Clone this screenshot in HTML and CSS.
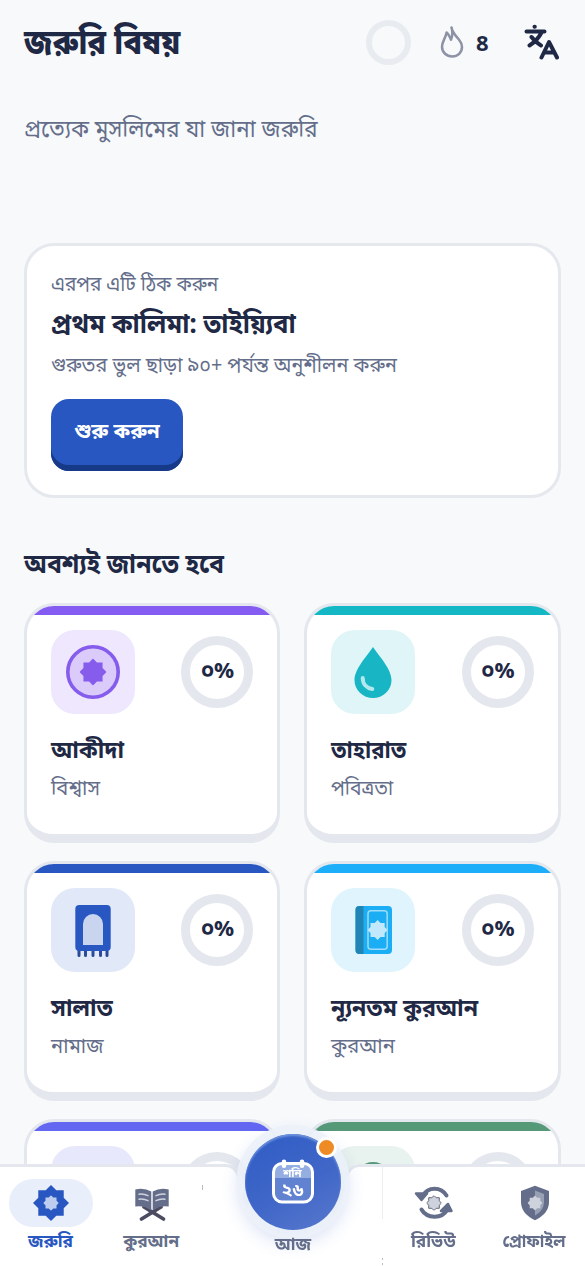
FILE: index.html
```html
<!DOCTYPE html>
<html lang="bn">
<head>
<meta charset="utf-8">
<meta name="viewport" content="width=device-width, initial-scale=1">
<title>জরুরি বিষয়</title>
<link rel="stylesheet" href="styles.css">
</head>
<body>
<svg class="defs" aria-hidden="true">
  <symbol id="star" viewBox="-18 -18 36 36"><path d="M0-18L5.27-12.73H12.73V-5.27L18 0L12.73 5.27V12.73H5.27L0 18L-5.27 12.73H-12.73V5.27L-18 0L-12.73-5.27V-12.73H-5.27Z"/></symbol>
</svg>
<div class="screen">
  <header class="topbar">
    <h1 class="page-title">জরুরি বিষয়</h1>
    <span class="goal-ring"></span>
    <svg class="flame" width="24" height="32" viewBox="0 0 24 32"><path d="M11.500 1.500c.5 4.800 3.800 7.600 7.400 12 2.100 2.600 3.100 5 3.100 7.500 0 5.500-4.300 9.500-9.800 9.500S2 26.500 2 20.700c0-5.200 3.500-8.200 4.600-14.200 2.200 1.700 3.200 4.200 4.400 7.200 1.500-3.700 1.700-8.300.5-12.200z"/></svg>
    <span class="streak" lang="en">&#56;</span>
    <svg class="translate" width="36" height="36" viewBox="0 0 36 36"><path d="M11.500 2.800h.3M3.500 7.500h18M18.500 8.500C16 13.500 12 18 6.500 21.500M8.500 13c2.500 3.500 5 6 9.500 8.500M18.500 33.500l7.500-15.500 8 15.500M21 28.500h10"/></svg>
  </header>
  <p class="intro">প্রত্যেক মুসলিমের যা জানা জরুরি</p>

  <section class="next-card">
    <p class="eyebrow">এরপর এটি ঠিক করুন</p>
    <h2 class="next-title">প্রথম কালিমা: তাইয়্যিবা</h2>
    <p class="next-copy">গুরুতর ভুল ছাড়া ৯০+ পর্যন্ত অনুশীলন করুন</p>
    <button class="start">শুরু করুন</button>
  </section>

  <h2 class="section-title">অবশ্যই জানতে হবে</h2>
  <main class="grid">
    <article class="card violet">
      <div class="card-head">
        <span class="tile"><svg width="54" height="54" viewBox="0 0 54 54"><circle cx="27" cy="27" r="25.200" fill="#dacbfb" stroke="#855cec" stroke-width="3.600"/><use href="#star" x="13.500" y="13.500" width="27" height="27" fill="#855cec"/></svg></span>
        <span class="ring">০%</span>
      </div>
      <h3 class="name">আকীদা</h3><p class="sub">বিশ্বাস</p>
    </article>
    <article class="card teal">
      <div class="card-head">
        <span class="tile"><svg width="54" height="54" viewBox="0 0 54 54"><path d="M27 2C33 11 45.500 24 45.500 35A18.500 18 0 0 1 8.500 35C8.500 24 21 11 27 2Z" fill="#18b6c4"/><path d="M16.700 33c0 6 4 10.200 9.600 11" fill="none" stroke="#b3e9ee" stroke-width="4" stroke-linecap="round"/></svg></span>
        <span class="ring">০%</span>
      </div>
      <h3 class="name">তাহারাত</h3><p class="sub">পবিত্রতা</p>
    </article>
    <article class="card blue">
      <div class="card-head">
        <span class="tile"><svg width="54" height="54" viewBox="0 0 54 54"><path d="M13 43v9.500M19.500 43v9.500M27 43v9.500M34.500 43v9.500M41 43v9.500" stroke="#2b4b99" stroke-width="3" stroke-linecap="round"/><rect x="9.300" y="2" width="35.400" height="46" rx="4" fill="#2857c2"/><path d="M17 42V21a10 10 0 0 1 20 0v21z" fill="#c9d4ef"/></svg></span>
        <span class="ring">০%</span>
      </div>
      <h3 class="name">সালাত</h3><p class="sub">নামাজ</p>
    </article>
    <article class="card sky">
      <div class="card-head">
        <span class="tile"><svg width="54" height="54" viewBox="0 0 54 54"><rect x="9.500" y="3" width="36.500" height="48" rx="4" fill="#1caef5"/><path d="M13.500 3h4v48h-4a4 4 0 0 1-4-4V7a4 4 0 0 1 4-4z" fill="#2085b5"/><rect x="22" y="7.700" width="19.200" height="38.500" rx="3" fill="none" stroke="#9edcf9" stroke-width="1.500"/><use href="#star" x="21.600" y="17" width="20" height="20" fill="#c1e9fb"/></svg></span>
        <span class="ring">০%</span>
      </div>
      <h3 class="name">ন্যূনতম কুরআন</h3><p class="sub">কুরআন</p>
    </article>
    <article class="card indigo">
      <div class="card-head"><span class="tile"></span><span class="ring"></span></div>
    </article>
    <article class="card green">
      <div class="card-head"><span class="tile"><svg width="54" height="54" viewBox="0 0 54 54"><circle cx="27" cy="19.500" r="18.500" fill="#559979"/></svg></span><span class="ring"></span></div>
    </article>
  </main>
</div>

<nav class="tabs">
  <a class="tab active"><span class="pill"><svg width="36" height="36" viewBox="0 0 36 36"><use href="#star" width="36" height="36" fill="#2857c2"/><use href="#star" x="10.200" y="10.200" width="15.600" height="15.600" fill="#bccdf0"/></svg></span><span class="label">জরুরি</span></a>
  <a class="tab"><span class="pill"><svg width="36" height="36" viewBox="0 0 36 36"><path d="M7.500 34L27 22M29.500 34L10 22" stroke="#4b4b61" stroke-width="3.600" stroke-linecap="round"/><path d="M1.300 4.500Q10 2.500 17.300 6.500V25.500Q10 20 1.300 21.500ZM34.700 4.500Q26 2.500 18.700 6.500V25.500Q26 20 34.700 21.500Z" fill="#646e8a"/><path d="M5 9.200q5-.6 9 1.500M5 14.200q5-.6 9 1.500M31 9.200q-5-.6-9 1.500M31 14.200q-5-.6-9 1.500" fill="none" stroke="#d0d4df" stroke-width="1.500" stroke-linecap="round"/></svg></span><span class="label">কুরআন</span></a>
  <div class="tab center">
    <svg class="notch" width="181" height="102" viewBox="0 0 181 102"><path d="M0 0H25Q35 1 37 14C38 48 60 71 90.500 71S143 48 144 14Q146 1 156 0H181V102H0Z" fill="#fff"/><path d="M0 1.500H24Q34 2 36.500 13M181 1.500H157Q147 2 144.500 13" fill="none" stroke="#e4e7ed" stroke-width="3"/><path d="M180.500 3v52" stroke="#eceef2"/><path d="M.5 21v5M180.500 94v2M180.500 99v2" stroke="#b8bbc2"/></svg>
    <span class="today"><svg width="44" height="48" viewBox="0 0 44 48"><rect x="2.500" y="5.500" width="39" height="38.500" rx="8.500" fill="#6182d0"/><path d="M2.500 20V14A8.500 8.500 0 0 1 11 5.500H33A8.500 8.500 0 0 1 41.500 14V20Z" fill="#94aee1"/><rect x="2.500" y="5.500" width="39" height="38.500" rx="8.500" fill="none" stroke="#fff" stroke-width="3"/><path d="M13 3.800v4M31 3.800v4" stroke="#fff" stroke-width="4.500" stroke-linecap="round"/><text x="21.500" y="18.500" class="weekday">শনি</text><text x="21.500" y="38" class="date">২৬</text></svg><i class="dot"></i></span>
    <span class="label today-label">আজ</span>
  </div>
  <a class="tab"><span class="pill"><svg width="40" height="36" viewBox="0 0 40 36"><path d="M9 10.500C14 1.500 27 1.500 32.500 10.500M7.500 24.500C13 34 28 34 33 25" fill="none" stroke="#646e8a" stroke-width="4" stroke-linecap="round"/><path d="M2 8.500L13 8.500L7.500 15ZM27 26L34 19L37.500 26Z" fill="#646e8a" stroke="#646e8a" stroke-width="2.500" stroke-linejoin="round"/><use href="#star" x="12.500" y="10.500" width="15" height="15" fill="#cdd2dd" stroke="#4b4b61" stroke-width="2"/></svg></span><span class="label">রিভিউ</span></a>
  <a class="tab"><span class="pill"><svg width="36" height="36" viewBox="0 0 36 36"><path d="M18 .8L32 6V17C32 25.500 26 31.500 18 35.200C10 31.500 4 25.500 4 17V6Z" fill="#646e8a"/><path d="M18 5.500L27 9V17C27 23.500 23 27.500 18 30.500Z" fill="#98a0b3"/><use href="#star" x="10.500" y="10.500" width="15" height="15" fill="#cdd2dd"/></svg></span><span class="label profile-label">প্রোফাইল</span></a>
</nav>
</body>
</html>
```
FILE: styles.css
```css
* { box-sizing: border-box; }
body { margin: 0; height: 1266px; overflow: hidden; background: #f7f9fb; color: #1f2945; font-family: "Noto Sans Bengali", "Noto Sans", sans-serif; }
h1, h2, h3, p { margin: 0; white-space: nowrap; transform-origin: left; }
svg { display: block; flex: none; }
.defs { position: absolute; width: 0; height: 0; }
.screen { width: 585px; height: 1266px; overflow: hidden; padding: 0 24px; }
.topbar { display: flex; align-items: center; height: 84px; }
.page-title { flex: 1; padding-top: 6px; font-size: 35px; line-height: 48px; font-weight: 800; transform: scaleX(.89); }
.goal-ring { width: 45px; height: 45px; border: 6px solid #e8ebf0; border-radius: 50%; margin-right: 29px; }
.flame { fill: none; stroke: #8d92a5; stroke-width: 2.5; stroke-linejoin: round; }
.streak { width: 14px; margin: 0 33px 0 12px; font: 700 22px/30px "Open Sans", sans-serif; }
.translate { margin-right: 2px; fill: none; stroke: #1f2945; stroke-width: 4; stroke-linecap: round; stroke-linejoin: round; }
.intro { height: 159px; padding-top: 29px; font-size: 24px; line-height: 36px; color: #646e8a; transform: scaleX(.93); }
.next-card { height: 255px; padding: 24px 24px 0; border: 3px solid #e5e8ed; border-radius: 30px; background: #fff; }
.eyebrow { font-size: 21px; line-height: 33px; color: #646e8a; transform: scaleX(.908); }
.next-title { padding-top: 1px; font-size: 27px; line-height: 44px; font-weight: 700; transform: scaleX(.948); }
.next-copy { font-size: 21px; line-height: 38px; color: #646e8a; transform: scaleX(.94); }
.start { display: block; width: 132px; height: 72px; margin-top: 13px; padding: 0 0 4px; border: 0; border-radius: 18px; background: #2857c2; box-shadow: inset 0 -6px #163a87; color: #fff; font: 700 20.500px/30px "Noto Sans Bengali", "Noto Sans", sans-serif; white-space: nowrap; }
.section-title { height: 105px; padding-top: 50px; font-size: 27px; line-height: 36px; font-weight: 700; transform: scaleX(.92); }
.grid { display: grid; grid-template-columns: 256.400px 256.400px; grid-auto-rows: 240px; gap: 18px 24px; }
.card { overflow: hidden; border: 3px solid #e4e7ed; border-bottom-width: 9px; border-radius: 30px; background: #fff; }
.card::before { content: ""; display: block; height: 9px; background: var(--accent); }
.card-head { display: flex; align-items: center; justify-content: space-between; padding: 15px 24px 0; }
.tile { display: grid; place-items: center; width: 84px; height: 84px; border-radius: 24px; background: var(--tint); }
.ring { display: grid; place-items: center; width: 72px; height: 72px; padding-top: 1px; border: 9px solid #e4e7ed; border-radius: 50%; font-size: 22px; line-height: 27px; font-weight: 700; }
.name { margin-left: 24px; padding-top: 20px; font-size: 24px; line-height: 36px; font-weight: 700; transform: scaleX(.965); }
.sub { margin-left: 24px; padding-top: 2px; font-size: 21px; line-height: 36px; color: #646e8a; transform: scaleX(.96); }
.violet { --accent: #855cf2; --tint: #eee7fe; }
.teal { --accent: #14b8c5; --tint: #dff5f7; }
.teal .name, .teal .sub { transform: scaleX(.92); }
.blue { --accent: #2857c2; --tint: #e1e8f7; }
.sky { --accent: #1caef8; --tint: #e0f4fe; }
.indigo { --accent: #6266f1; --tint: #e8e8fd; }
.green { --accent: #559979; --tint: #e8f2ee; }
.tabs { position: fixed; left: 0; top: 1164px; display: grid; grid-template-columns: 101px 101px 181px 101px 101px; width: 585px; height: 102px; }
.tab { display: flex; flex-direction: column; align-items: center; padding-top: 12px; border-top: 3px solid #e4e7ed; background: #fff; color: #646e8a; font-size: 18px; line-height: 27px; font-weight: 700; white-space: nowrap; }
.label { padding-top: 2px; transform: scaleX(.96); }
.profile-label { transform: scaleX(.9); }
.active { color: #2857c2; }
.pill { display: grid; place-items: center; width: 84px; height: 48px; border-radius: 24px; }
.active .pill { background: #e9eefb; }
.center { position: relative; padding: 0; border: 0; background: none; }
.notch { position: absolute; top: 0; left: 0; }
.today { position: relative; display: grid; place-items: center; width: 96px; height: 96px; margin-top: -30px; border-radius: 50%; background: linear-gradient(150deg, #2f5cc5, #4067c8 55%, #5878cd); box-shadow: 0 0 0 9px #edf1f9dd, 0 6px 18px 6px #3860c633, inset 0 2px 2px #6f93dd; }
.dot { position: absolute; left: 71.500px; top: 3px; width: 21px; height: 21px; border: 3px solid #fff; border-radius: 50%; background: #ef8b25; }
.today-label { position: relative; }
.weekday, .date { fill: #fff; font-weight: 700; text-anchor: middle; }
.weekday { font-size: 11.500px; }
.date { font-size: 18px; }
```
